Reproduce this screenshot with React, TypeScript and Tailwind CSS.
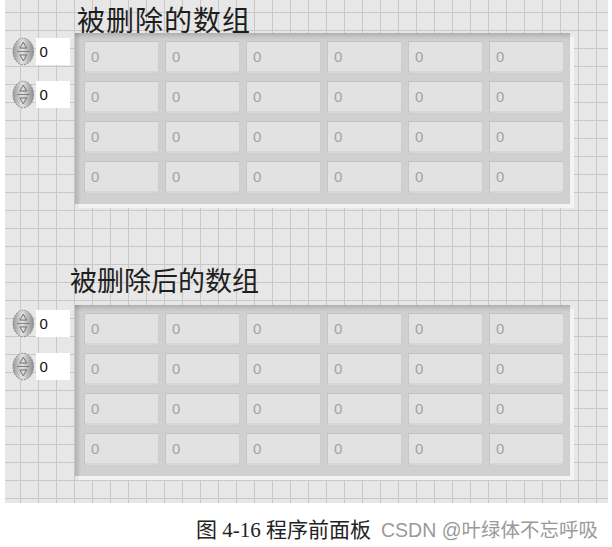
import React from 'react';

const Spinner = () => (
  <svg width="23" height="29" viewBox="0 0 23 29">
    <defs>
      <linearGradient id="spg" x1="0" y1="0" x2="1" y2="0">
        <stop offset="0" stopColor="#9a9a9a" />
        <stop offset="0.45" stopColor="#e2e2e2" />
        <stop offset="1" stopColor="#8e8e8e" />
      </linearGradient>
    </defs>
    <ellipse cx="11.5" cy="14.5" rx="10.5" ry="13.5" fill="url(#spg)" stroke="#8a8a8a" strokeWidth="1" strokeDasharray="2 1.2" />
    <path d="M11.5 5 L15 11 L8 11 Z" fill="none" stroke="#6d6d6d" strokeWidth="1" />
    <line x1="5" y1="14.5" x2="18" y2="14.5" stroke="#7c7c7c" strokeWidth="1" />
    <path d="M11.5 24 L15 18 L8 18 Z" fill="none" stroke="#6d6d6d" strokeWidth="1" />
  </svg>
);

const IndexControl = () => (
  <div className="flex items-center h-[28px]">
    <Spinner />
    <div className="ml-[1px] w-[35px] h-[27px] bg-white pl-[4px] text-[15px] leading-[27px] text-[#111]">0</div>
  </div>
);

const Cell = () => (
  <div className="w-[75px] h-[33px] bg-[#e2e2e2] border border-[#cdcdcd] border-t-[#c2c2c2] border-l-[#c6c6c6] shadow-[inset_0_-2px_0_#d6d6d6] pl-[6px] pt-[5px] text-[15px] leading-[20px] text-[#a3a3a3]">
    0
  </div>
);

const ArrayPanel = () => (
  <div className="bg-[#d0d0d0] pl-[9px] pt-[8px] pr-[6px] pb-[10px] shadow-[inset_0_6px_4px_-3px_rgba(0,0,0,0.16),inset_6px_0_4px_-3px_rgba(0,0,0,0.14),4px_4px_0_#f3f3f3]">
    <div className="grid grid-cols-6 gap-x-[6px] gap-y-[7px]">
      {Array.from({ length: 24 }).map((_, i) => (
        <Cell key={i} />
      ))}
    </div>
  </div>
);

const Section = ({ label, labelClass }: { label: string; labelClass: string }) => (
  <div>
    <div className={`${labelClass} leading-[28px] whitespace-nowrap text-[#1e1e1e] font-['Noto_Sans_CJK_SC',sans-serif]`}>
      {label}
    </div>
    <div className="flex items-start">
      <div className="ml-[7px] w-[58px] pt-[4px] flex flex-col gap-[15px]">
        <IndexControl />
        <IndexControl />
      </div>
      <div className="ml-[5px]">
        <ArrayPanel />
      </div>
    </div>
  </div>
);

export default function App() {
  return (
    <div className="w-[612px] h-[547px] bg-white font-['Liberation_Sans','Noto_Sans_CJK_SC',sans-serif] overflow-hidden">
      <div className="ml-[5px] w-[603px] h-[503px] bg-[#e7e7e7] bg-[image:linear-gradient(to_right,#c8c8c8_1px,transparent_1px),linear-gradient(to_bottom,#c8c8c8_1px,transparent_1px)] bg-[size:18px_18px] bg-[position:15px_12px]">
        <Section label="被删除的数组" labelClass="ml-[72px] pt-[5px] text-[28px] tracking-[1px]" />
        <div className="h-[62px]" />
        <Section label="被删除后的数组" labelClass="ml-[65px] pb-[11px] text-[27px]" />
      </div>
      <div className="flex items-baseline whitespace-nowrap pl-[196px] pt-[14px]">
        <span className="text-[21px] leading-[26px] text-[#222] font-['Liberation_Serif','Noto_Sans_CJK_SC',serif]">
          图 4-16 程序前面板
        </span>
        <span className="ml-[10px] text-[19.5px] leading-[26px] text-[#9a9a9a]">CSDN @叶绿体不忘呼吸</span>
      </div>
    </div>
  );
}
